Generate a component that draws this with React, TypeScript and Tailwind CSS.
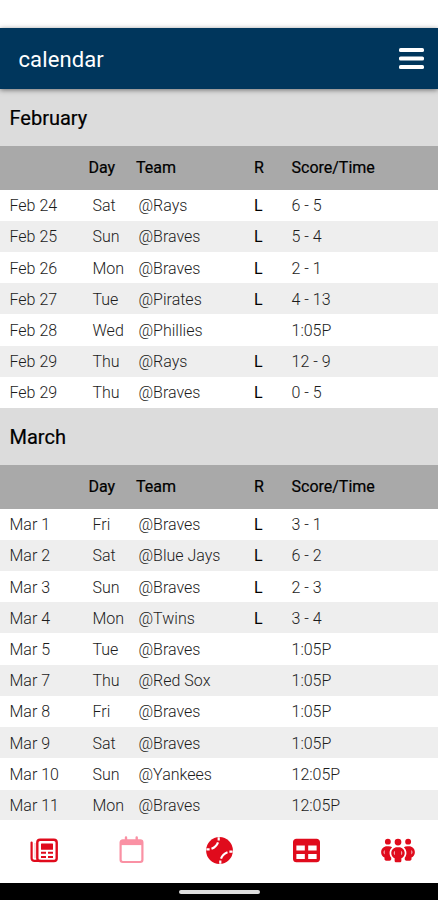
import React from 'react';
import { FaTable, FaPeopleGroup } from 'react-icons/fa6';

interface Game {
  date: string;
  day: string;
  team: string;
  result?: string;
  score: string;
}

const february: Game[] = [
  { date: 'Feb 24', day: 'Sat', team: '@Rays', result: 'L', score: '6 - 5' },
  { date: 'Feb 25', day: 'Sun', team: '@Braves', result: 'L', score: '5 - 4' },
  { date: 'Feb 26', day: 'Mon', team: '@Braves', result: 'L', score: '2 - 1' },
  { date: 'Feb 27', day: 'Tue', team: '@Pirates', result: 'L', score: '4 - 13' },
  { date: 'Feb 28', day: 'Wed', team: '@Phillies', score: '1:05P' },
  { date: 'Feb 29', day: 'Thu', team: '@Rays', result: 'L', score: '12 - 9' },
  { date: 'Feb 29', day: 'Thu', team: '@Braves', result: 'L', score: '0 - 5' },
];

const march: Game[] = [
  { date: 'Mar 1', day: 'Fri', team: '@Braves', result: 'L', score: '3 - 1' },
  { date: 'Mar 2', day: 'Sat', team: '@Blue Jays', result: 'L', score: '6 - 2' },
  { date: 'Mar 3', day: 'Sun', team: '@Braves', result: 'L', score: '2 - 3' },
  { date: 'Mar 4', day: 'Mon', team: '@Twins', result: 'L', score: '3 - 4' },
  { date: 'Mar 5', day: 'Tue', team: '@Braves', score: '1:05P' },
  { date: 'Mar 7', day: 'Thu', team: '@Red Sox', score: '1:05P' },
  { date: 'Mar 8', day: 'Fri', team: '@Braves', score: '1:05P' },
  { date: 'Mar 9', day: 'Sat', team: '@Braves', score: '1:05P' },
  { date: 'Mar 10', day: 'Sun', team: '@Yankees', score: '12:05P' },
  { date: 'Mar 11', day: 'Mon', team: '@Braves', score: '12:05P' },
];

const App: React.FC = () => (
  <div className="flex h-[900px] w-[438px] flex-col overflow-hidden bg-white font-['Roboto',sans-serif] text-black">
    <div className="h-[27.5px] shrink-0" />
    <header className="z-10 flex h-[61.5px] shrink-0 items-center justify-between bg-[#00365c] pr-3.5 pl-[18.5px] text-white shadow-[0_1px_5px_rgba(0,0,0,0.5)]">
      <h1 className="pt-[3px] text-[22px] leading-7 tracking-[0.1px]">calendar</h1>
      <MenuIcon />
    </header>

    <main className="h-[731px] shrink-0 overflow-hidden">
      <Month name="February" games={february} />
      <Month name="March" games={march} />
    </main>

    <nav className="grid h-[62.5px] shrink-0 grid-cols-5 items-center justify-items-center bg-white pb-0.5 text-[#e00b1c]">
      <NewsIcon />
      <CalendarIcon />
      <BaseballIcon />
      <FaTable className="h-[27px] w-[27px]" />
      <FaPeopleGroup className="ml-[7px] h-[27px] w-[34px]" />
    </nav>
    <div className="flex flex-1 items-center justify-center bg-black">
      <div className="mt-0.5 h-1 w-[81px] rounded-full bg-[#dedede]" />
    </div>
  </div>
);

const Month = ({ name, games }: { name: string; games: Game[] }) => (
  <section>
    <h2 className="flex h-[56.5px] items-center bg-[#dcdcdc] pt-0.5 pl-[9.5px] text-xl [-webkit-text-stroke:0.2px_black]">{name}</h2>
    <div className="grid h-[44px] grid-cols-[88.5px_47.5px_118px_37.5px_1fr] items-center bg-[#a9a9a9] pt-px text-base font-normal [-webkit-text-stroke:0.2px_black]">
      <span />
      <span>Day</span>
      <span>Team</span>
      <span>R</span>
      <span>Score/Time</span>
    </div>
    {games.map((game, i) => (
      <div
        key={i}
        className={`grid h-[31.22px] grid-cols-[83px_46px_115.5px_37.5px_1fr] items-center pt-0.5 pl-[9.5px] text-base font-light text-[#1c1c1c] ${i % 2 ? 'bg-[#eeeeee]' : 'bg-white'}`}
      >
        <span>{game.date}</span>
        <span>{game.day}</span>
        <span>{game.team}</span>
        <span className="font-normal text-black">{game.result}</span>
        <span>{game.score}</span>
      </div>
    ))}
  </section>
);

const MenuIcon = () => (
  <svg className="h-[23px] w-[25px]" viewBox="0 0 25 23" fill="currentColor">
    <rect y="0.9" width="25" height="4.2" rx="1.6" />
    <rect y="9.4" width="25" height="4.2" rx="1.6" />
    <rect y="17.9" width="25" height="4.2" rx="1.6" />
  </svg>
);

const NewsIcon = () => (
  <svg className="h-[27px] w-7" viewBox="0 0 28 27" fill="none" stroke="currentColor">
    <rect x="7.3" y="2.8" width="19.4" height="21.2" rx="2.8" strokeWidth="2.4" />
    <path d="M1.6 5.5v15.7a2.7 2.7 0 0 0 2.7 2.7h6" strokeWidth="2.2" strokeLinecap="round" />
    <path d="M5 6v15" strokeWidth="1" opacity="0.3" />
    <rect x="11" y="6.5" width="12" height="6.3" rx="0.6" fill="currentColor" stroke="none" />
    <path d="M11 15.7h5M18 15.7h5M11 20h5M18 20h5" strokeWidth="2" />
  </svg>
);

const CalendarIcon = () => (
  <svg className="h-7 w-[25px] text-[#fa91a4]" viewBox="0 0 25 28" fill="none" stroke="currentColor">
    <rect x="1.6" y="4.4" width="21.8" height="21.6" rx="2.2" strokeWidth="2.2" />
    <path d="M1.6 6.6h21.8" strokeWidth="5" />
    <path d="M7 1.5v4M17.7 1.5v4" strokeWidth="2.4" strokeLinecap="round" />
  </svg>
);

// ball with two stitched seams
const BaseballIcon = () => (
  <svg className="ml-px h-[27px] w-[27px]" viewBox="0 0 27 27" fill="none">
    <circle cx="13.5" cy="13.5" r="13.4" fill="currentColor" />
    <g stroke="white" strokeWidth="2.2">
      <path d="M5.5 11.8A10.7 10.7 0 0 0 12 5.4" />
      <path d="M21.5 15.2A10.7 10.7 0 0 0 15 21.6" />
      <path d="M0.4 12.4h3.2M12.7 0.2v3.2M26.6 14.6h-3.2M14.3 26.8v-3.2" />
    </g>
  </svg>
);

export default App;
